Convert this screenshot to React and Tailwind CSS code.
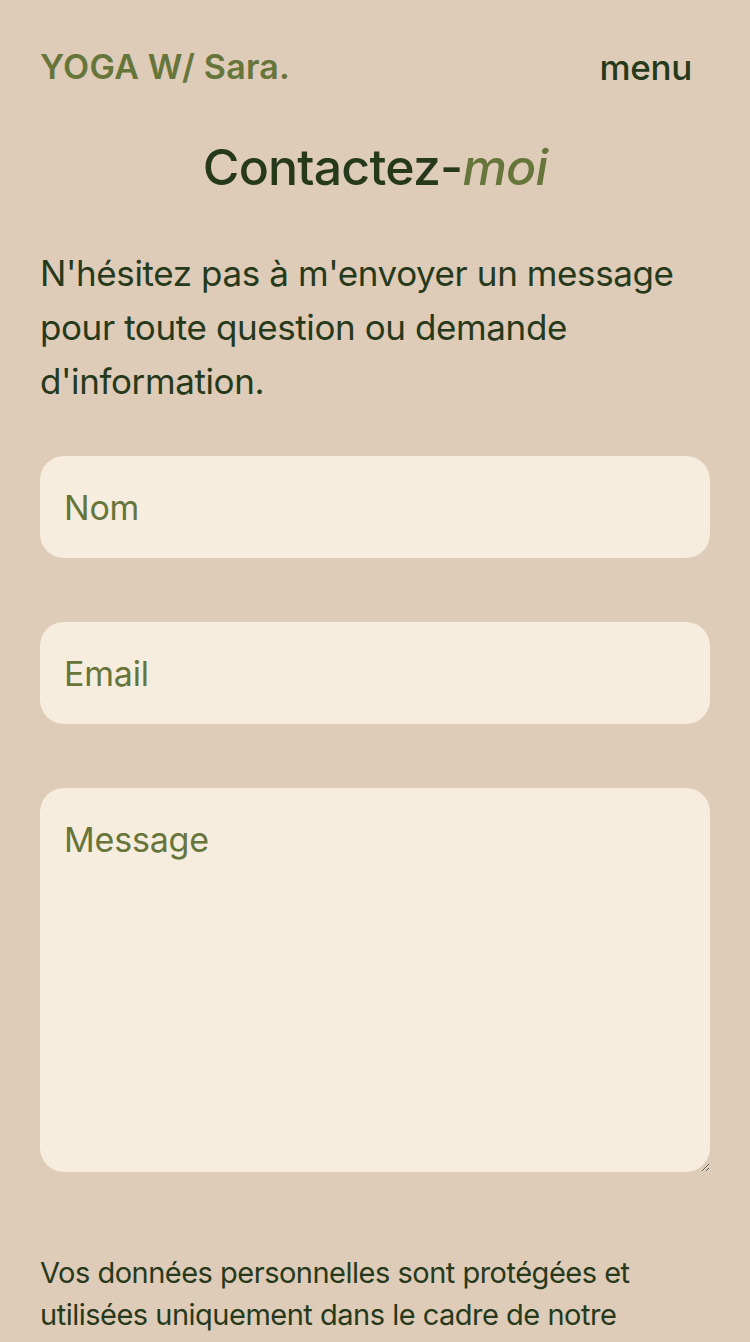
export default function App() {
  return (
    <div className="min-h-[1342px] w-full bg-[#decbb8] px-[40px] text-[#263a1b]" style={{ fontFamily: "Inter, 'Noto Sans', sans-serif" }}>
      <header className="flex items-center justify-between pt-[44px]">
        <div className="text-[34px] font-semibold leading-[46px] tracking-[0.2px] text-[#66753a]">YOGA W/ Sara.</div>
        <div className="mr-[18px] text-[35px] font-medium leading-[46px] tracking-[-0.3px] text-[#263a1b]">menu</div>
      </header>
      <h1 className="mt-[48px] text-center text-[50px] font-medium leading-[58px] tracking-[-0.8px]">
        Contactez-<span className="italic text-[#66753a]">moi</span>
      </h1>
      <p className="mt-[50px] text-[35px] leading-[54px] tracking-[-0.4px]">
        N'hésitez pas à m'envoyer un message pour toute question ou demande d'information.
      </p>
      <form className="mt-[48px] flex flex-col gap-[64px]">
        <input
          type="text"
          placeholder="Nom"
          className="h-[102px] w-full rounded-[24px] bg-[#f6eddf] px-[24px] text-[34px] tracking-[-0.2px] outline-none placeholder:text-[#66753a]"
        />
        <input
          type="email"
          placeholder="Email"
          className="h-[102px] w-full rounded-[24px] bg-[#f6eddf] px-[24px] text-[34px] tracking-[-0.2px] outline-none placeholder:text-[#66753a]"
        />
        <textarea
          placeholder="Message"
          className="block h-[384px] w-full rounded-[24px] bg-[#f6eddf] px-[24px] pt-[31px] text-[34px] leading-[42px] tracking-[-0.2px] outline-none placeholder:text-[#66753a]"
        />
      </form>
      <p className="mt-[80px] text-[29px] leading-[42px] tracking-[-0.5px]">
        Vos données personnelles sont protégées et utilisées uniquement dans le cadre de notre échange.
      </p>
    </div>
  );
}
